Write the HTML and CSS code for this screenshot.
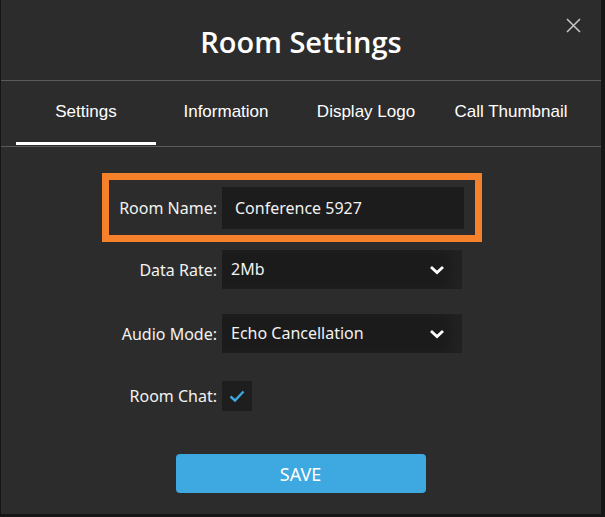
FILE: index.html
```html
<!DOCTYPE html>
<html lang="en">
<head>
  <meta charset="UTF-8" />
  <title>Room Settings</title>
  <link rel="stylesheet" href="styles.css">
</head>
<body>
  <div class="dialog">
    <header class="dialog-head">
      <h1>Room Settings</h1>
      <button class="close" aria-label="Close">
        <svg width="15" height="15" viewBox="0 0 15 15"><path d="M1 1 L14 14 M14 1 L1 14" stroke="#c8c8c8" stroke-width="1.5" fill="none"/></svg>
      </button>
    </header>

    <nav class="tabs">
      <div class="tab active">Settings</div>
      <div class="tab">Information</div>
      <div class="tab">Display Logo</div>
      <div class="tab">Call Thumbnail</div>
    </nav>

    <div class="form">
      <div class="row highlight">
        <label>Room Name:</label>
        <div class="input">Conference 5927</div>
      </div>
      <div class="row rate">
        <label>Data Rate:</label>
        <div class="select">2Mb
          <svg class="chev" width="16" height="10" viewBox="0 0 16 10"><path d="M2 2 L8 7.5 L14 2" stroke="#fff" stroke-width="2.8" fill="none"/></svg>
        </div>
      </div>
      <div class="row audio">
        <label>Audio Mode:</label>
        <div class="select">Echo Cancellation
          <svg class="chev" width="16" height="10" viewBox="0 0 16 10"><path d="M2 2 L8 7.5 L14 2" stroke="#fff" stroke-width="2.8" fill="none"/></svg>
        </div>
      </div>
      <div class="row chat">
        <label>Room Chat:</label>
        <div class="check">
          <svg width="16" height="14" viewBox="0 0 16 14"><path d="M1.5 7.5 L6 11.5 L14.5 2.5" stroke="#3ea6e0" stroke-width="2.4" fill="none"/></svg>
        </div>
      </div>
    </div>

    <div class="actions">
      <button class="save">SAVE</button>
    </div>
  </div>
</body>
</html>
```

FILE: styles.css
```css
body {
  margin: 0;
  background-color: #161616;
  font-family: 'Noto Sans', 'Open Sans', sans-serif;
  color: #fff;
}
.dialog {
  margin-left: 1px;
  width: 600px;
  height: 514px;
  background-color: #2c2c2c;
  position: relative;
}
.dialog-head {
  height: 80px;
  border-bottom: 1px solid #5a5a5a;
  display: flex;
  align-items: center;
  justify-content: center;
}
.dialog-head h1 {
  margin: 0;
  font-family: 'Open Sans', sans-serif;
  font-weight: 600;
  font-size: 29px;
  padding-top: 2px;
}
.close {
  position: absolute;
  top: 18px;
  right: 20px;
  background: none;
  border: none;
  padding: 0;
  cursor: pointer;
}
.tabs {
  display: flex;
  padding-left: 15px;
  height: 65px;
  border-bottom: 1px solid #5a5a5a;
}
.tab {
  width: 140px;
  text-align: center;
  font-family: 'Liberation Sans', Arial, sans-serif;
  font-size: 17px;
  line-height: 60px;
  border-bottom: 3px solid transparent;
  box-sizing: border-box;
  height: 65px;
  padding-top: 1px;
  white-space: nowrap;
}
.tab:last-child {
  padding-left: 10px;
}
.tab.active {
  border-bottom: 3px solid #fff;
  height: 64px;
}
.form {
  margin-left: 101px;
  margin-top: 26px;
  width: 380px;
  font-size: 16px;
  color: #f2f2f2;
}
.row {
  display: flex;
  align-items: center;
  padding-left: 7px;
}
.row label {
  width: 108px;
  text-align: right;
  margin-right: 5px;
  white-space: nowrap;
}
.highlight {
  border: 7px solid #f5822a;
  padding: 7px 10px 6px 0;
}
.input {
  width: 242px;
  height: 42px;
  box-sizing: border-box;
  background-color: #1c1c1c;
  padding-left: 13px;
  line-height: 42px;
}
.select {
  width: 240px;
  height: 39px;
  box-sizing: border-box;
  background-color: #1b1b1b;
  padding-left: 9px;
  line-height: 39px;
  display: flex;
  align-items: center;
  justify-content: space-between;
  padding-right: 17px;
  box-shadow: inset -12px 0 14px rgba(255,255,255,0.03);
}
.rate { margin-top: 8px; }
.audio { margin-top: 25px; }
.chat { margin-top: 28px; }
.check {
  width: 30px;
  height: 30px;
  background-color: #1e1e1e;
  display: flex;
  align-items: center;
  justify-content: center;
}
.actions {
  display: flex;
  justify-content: center;
  margin-top: 43px;
  padding-right: 1px;
}
.save {
  width: 250px;
  height: 39px;
  background-color: #3ea8e0;
  color: #fff;
  border: none;
  border-radius: 4px;
  font-family: 'Noto Sans', sans-serif;
  font-size: 18px;
  cursor: pointer;
}
```
